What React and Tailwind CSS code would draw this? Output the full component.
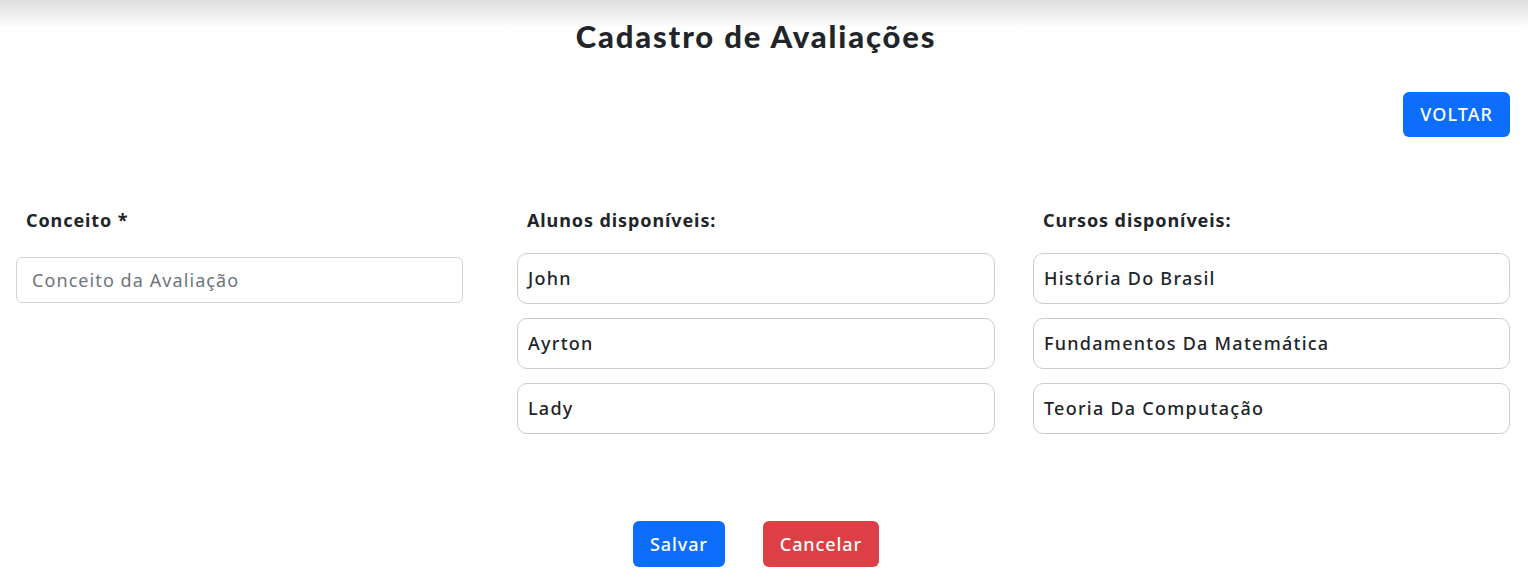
const ALUNOS = ['John', 'Ayrton', 'Lady'];
const CURSOS = ['História Do Brasil', 'Fundamentos Da Matemática', 'Teoria Da Computação'];

function OptionBox({ label }) {
    return (
        <div className="h-[51px] flex items-center px-[10px] rounded-[10px] border border-[#cccccc] bg-white text-[18px] font-medium tracking-[0.07em] text-[#212529]">
            {label}
        </div>
    );
}

export default function App() {
    return (
        <div className="min-h-[579px] bg-white font-['Noto_Sans',sans-serif] text-[#212529]">
            <div className="h-[28px] bg-gradient-to-b from-[#dedede] to-white" />
            <h1 className="-mt-[7px] pr-[16px] text-center font-['Lato',sans-serif] text-[31px] font-black tracking-[0.06em] text-[#212529] leading-none">
                Cadastro de Avaliações
            </h1>

            <div className="flex justify-end pr-[18px] mt-[40px]">
                <button className="h-[45px] px-[17px] rounded-[6px] bg-[#0d6efd] text-white text-[18px] font-medium tracking-[0.06em] uppercase">
                    Voltar
                </button>
            </div>

            <div className="flex pl-[16px] mt-[71px]">
                <div className="w-[447px]">
                    <p className="pl-[10px] text-[18px] font-bold tracking-[0.05em] leading-[24px]">Conceito *</p>
                    <input
                        className="mt-[25px] w-full h-[46px] px-[15px] rounded-[6px] border border-[#ced4da] text-[18px] tracking-[0.06em] placeholder:text-[#6c757d] outline-none"
                        placeholder="Conceito da Avaliação"
                    />
                </div>

                <div className="w-[478px] ml-[54px]">
                    <p className="pl-[10px] text-[18px] font-bold tracking-[0.05em] leading-[24px]">Alunos disponíveis:</p>
                    <div className="mt-[21px] flex flex-col gap-[14px]">
                        {ALUNOS.map((a) => (
                            <OptionBox key={a} label={a} />
                        ))}
                    </div>
                </div>

                <div className="w-[477px] ml-[38px]">
                    <p className="pl-[10px] text-[18px] font-bold tracking-[0.05em] leading-[24px]">Cursos disponíveis:</p>
                    <div className="mt-[21px] flex flex-col gap-[14px]">
                        {CURSOS.map((c) => (
                            <OptionBox key={c} label={c} />
                        ))}
                    </div>
                </div>
            </div>

            <div className="flex justify-center gap-[38px] mt-[87px] pr-[16px]">
                <button className="h-[46px] px-[17px] rounded-[6px] bg-[#0d6efd] text-white text-[18px] font-medium tracking-[0.05em]">
                    Salvar
                </button>
                <button className="h-[46px] px-[17px] rounded-[6px] bg-[#dc3f46] text-white text-[18px] font-medium tracking-[0.05em]">
                    Cancelar
                </button>
            </div>
        </div>
    );
}
